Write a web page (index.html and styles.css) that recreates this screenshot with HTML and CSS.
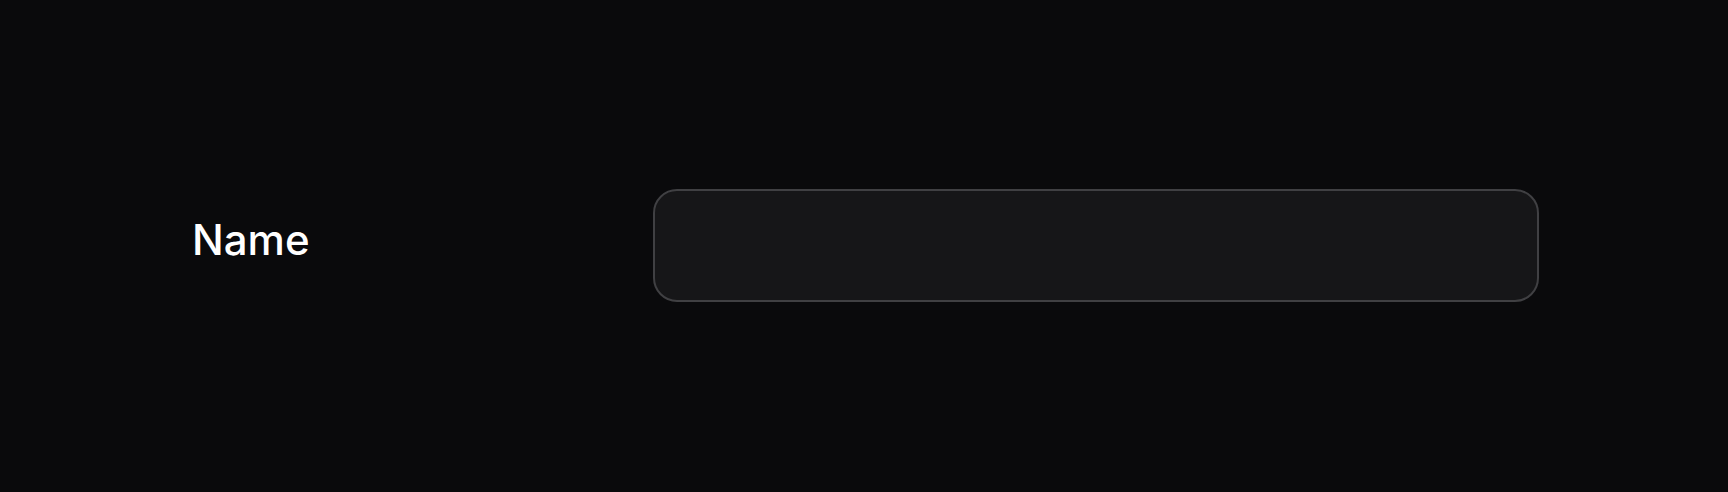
FILE: index.html
```html
<!DOCTYPE html>
<html lang="en">
<head>
<meta charset="utf-8">
<link rel="stylesheet" href="styles.css">
</head>
<body>
<main class="page">
  <div class="field-row">
    <label class="field-label" for="name">Name</label>
    <input class="field-input" id="name" type="text">
  </div>
</main>
</body>
</html>
```

FILE: styles.css
```css
html, body {
  margin: 0;
  padding: 0;
  background: #0a0a0c;
  height: 100%;
}
.page {
  height: 492px;
  display: flex;
  align-items: flex-start;
  padding-top: 189px;
  padding-left: 192px;
  box-sizing: border-box;
}
.field-row {
  display: grid;
  grid-template-columns: 461px 886px;
  align-items: center;
}
.field-label {
  font-family: Inter, "Noto Sans", sans-serif;
  font-size: 42px;
  font-weight: 500;
  color: #ffffff;
  line-height: 1;
  padding-bottom: 12px;
}
.field-input {
  box-sizing: border-box;
  width: 886px;
  height: 113px;
  background: #161618;
  border: 2px solid #404043;
  border-radius: 24px;
  outline: none;
  color: #fff;
  font-size: 32px;
  padding: 0 24px;
}
```
